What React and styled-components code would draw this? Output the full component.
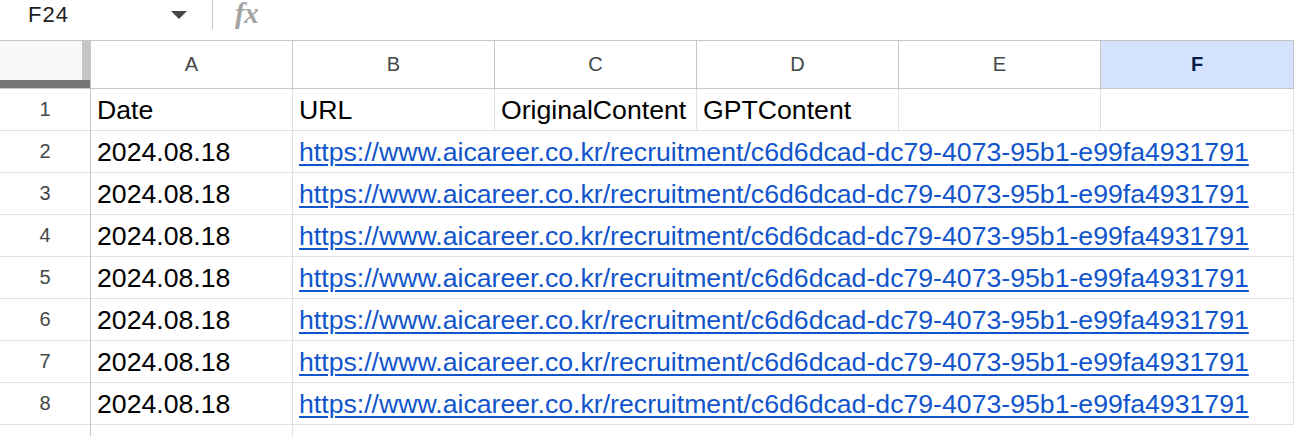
import React from 'react';
import styled, { createGlobalStyle } from 'styled-components';

const GlobalStyle = createGlobalStyle`
  html, body {
    margin: 0;
    padding: 0;
    background: #fff;
    overflow: hidden;
  }
  * {
    box-sizing: border-box;
  }
`;

const Sheet = styled.div`
  width: 1294px;
  height: 436px;
  overflow: hidden;
  font-family: 'Liberation Sans', Arial, sans-serif;
  color: #000;
`;

// 상단 이름 상자 + 수식 입력줄
const FormulaBar = styled.div`
  height: 40px;
  display: flex;
  align-items: flex-start;
`;

const NameBox = styled.div`
  width: 213px;
  height: 29px;
  display: flex;
  align-items: center;
  justify-content: space-between;
  padding: 0 25px 0 28px;
  border-right: 1px solid #c7c7c7;
  font-size: 22px;
  letter-spacing: 1px;
  color: #1f1f1f;
`;

const Caret = styled.span`
  width: 0;
  height: 0;
  border-left: 8px solid transparent;
  border-right: 8px solid transparent;
  border-top: 8px solid #444746;
  margin-top: 1px;
`;

const Fx = styled.span`
  margin-left: 22px;
  margin-top: 0;
  height: 28px;
  line-height: 26px;
  font-family: 'Liberation Serif', serif;
  font-style: italic;
  font-weight: 700;
  font-size: 29px;
  letter-spacing: -0.5px;
  color: #a3a3a3;
`;

const Row = styled.div`
  display: grid;
  grid-template-columns: 91px repeat(5, 202px) 1fr;
  height: ${(p) => p.$height || 42}px;
`;

const HeaderRow = styled(Row)`
  border-top: 1px solid #c4c7c5;
`;

const Corner = styled.div`
  position: relative;
  background: #f8f9fa;
  border-right: 1px solid #c4c7c5;
  border-bottom: 1px solid #c4c7c5;
  &::before {
    content: '';
    position: absolute;
    top: 0;
    right: 0;
    width: 8px;
    height: 100%;
    background: #c4c7c5;
  }
  &::after {
    content: '';
    position: absolute;
    left: 0;
    right: 0;
    bottom: 0;
    height: 8px;
    background: #747775;
  }
`;

const ColHead = styled.div`
  display: flex;
  align-items: center;
  justify-content: center;
  border-right: 1px solid #c4c7c5;
  border-bottom: 1px solid #c4c7c5;
  font-size: 20px;
  background: ${(p) => (p.$active ? '#d3e3fd' : '#fff')};
  color: ${(p) => (p.$active ? '#041e49' : '#444746')};
  font-weight: ${(p) => (p.$active ? 700 : 400)};
`;

const RowHead = styled.div`
  display: flex;
  align-items: center;
  justify-content: center;
  border-right: 1px solid #c4c7c5;
  border-bottom: 1px solid #e1e1e1;
  font-size: 20px;
  color: #444746;
`;

const Cell = styled.div`
  display: flex;
  align-items: flex-end;
  padding: 0 6px 4px;
  border-right: ${(p) => (p.$noRight ? 'none' : '1px solid #e1e1e1')};
  border-bottom: ${(p) => (p.$noBottom ? 'none' : '1px solid #e1e1e1')};
  grid-column: span ${(p) => p.$span || 1};
  font-size: 26.67px;
  white-space: nowrap;
  overflow: visible;
`;

const Link = styled.a`
  color: #1155cc;
  text-decoration: underline;
  text-underline-offset: 3px;
`;

const URL = 'https://www.aicareer.co.kr/recruitment/c6d6dcad-dc79-4073-95b1-e99fa4931791';
const columns = ['A', 'B', 'C', 'D', 'E', 'F'];

export default function App() {
  const dataRows = [2, 3, 4, 5, 6, 7, 8];

  return (
    <>
      <GlobalStyle />
      <Sheet>
        <FormulaBar>
          <NameBox>
            F24
            <Caret />
          </NameBox>
          <Fx>fx</Fx>
        </FormulaBar>

        <HeaderRow $height={49}>
          <Corner />
          {columns.map((c) => (
            <ColHead key={c} $active={c === 'F'}>
              {c}
            </ColHead>
          ))}
        </HeaderRow>

        <Row>
          <RowHead>1</RowHead>
          <Cell>Date</Cell>
          <Cell>URL</Cell>
          <Cell>OriginalContent</Cell>
          <Cell>GPTContent</Cell>
          <Cell />
          <Cell />
        </Row>

        {dataRows.map((n) => (
          <Row key={n}>
            <RowHead>{n}</RowHead>
            <Cell>2024.08.18</Cell>
            <Cell $span={5}>
              <Link>{URL}</Link>
            </Cell>
          </Row>
        ))}

        {/* 아래 잘린 9행 */}
        <Row>
          <RowHead />
          <Cell />
          <Cell $noRight />
        </Row>
      </Sheet>
    </>
  );
}
